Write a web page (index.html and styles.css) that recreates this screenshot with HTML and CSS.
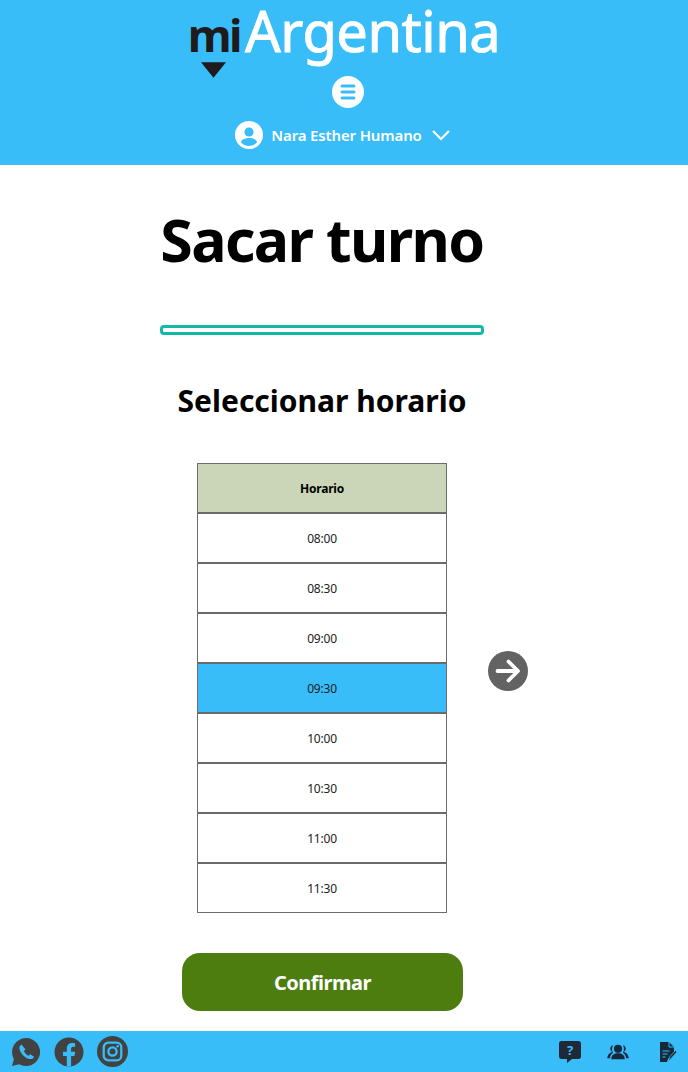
FILE: index.html
```html
<!DOCTYPE html>
<html lang="es">
  <head>
    <meta charset="UTF-8" />
    <meta name="viewport" content="width=device-width, initial-scale=1.0" />
    <title>miArgentina - Sacar turno</title>
    <link rel="stylesheet" href="styles.css">
  </head>
  <body>
    <header class="top-bar">
      <a href="#" class="logo">
        <span class="logo-mi">mi<svg class="logo-pin" viewBox="0 0 24 15"><path d="M0 0h24L12 15z" /></svg></span>
        <span class="logo-argentina">Argentina</span>
      </a>
      <button class="menu-btn" aria-label="Menu">
        <svg viewBox="0 0 32 32" width="32" height="32">
          <circle cx="16" cy="16" r="16" fill="#fff" />
          <path d="M10 10h12M10 16h12M10 22h12" stroke="#38bdf8" stroke-width="3" stroke-linecap="round" />
        </svg>
      </button>
      <div class="user-row">
        <svg viewBox="0 0 28 28" width="28" height="28">
          <circle cx="14" cy="14" r="14" fill="#fff" />
          <circle cx="14" cy="11" r="4.6" fill="#38bdf8" />
          <path d="M5.8 21c1.5-3 4.4-4 8.2-4s6.700 1 8.200 4c-2 2.500-5 4-8.200 4s-6.200-1.500-8.200-4z" fill="#38bdf8" />
        </svg>
        <span class="user-name">Nara Esther Humano</span>
        <svg class="user-caret" viewBox="0 0 18 11" width="18" height="11">
          <path d="M1 1l8 8 8-8" fill="none" stroke="#fff" stroke-width="2.200" />
        </svg>
      </div>
    </header>

    <main class="content">
      <div class="column">
        <h1 class="page-title">Sacar turno</h1>
        <div class="progress"></div>
        <h2 class="step-title">Seleccionar horario</h2>

        <div class="table-row">
          <div></div>
          <table class="hours">
            <thead>
              <tr><th>Horario</th></tr>
            </thead>
            <tbody>
              <tr><td>08:00</td></tr>
              <tr><td>08:30</td></tr>
              <tr><td>09:00</td></tr>
              <tr><td class="selected">09:30</td></tr>
              <tr><td>10:00</td></tr>
              <tr><td>10:30</td></tr>
              <tr><td>11:00</td></tr>
              <tr><td>11:30</td></tr>
            </tbody>
          </table>
          <button class="next-btn" aria-label="Siguiente">
            <svg viewBox="0 0 40 40" width="40" height="40">
              <circle cx="20" cy="20" r="20" fill="#636363" />
              <path d="M9.500 20h20M20.500 10.500l9.500 9.500-9.500 9.500" fill="none" stroke="#fff" stroke-width="3.800" stroke-linecap="round" stroke-linejoin="round" />
            </svg>
          </button>
        </div>

        <button class="confirm-btn">Confirmar</button>
      </div>
    </main>

    <footer class="bottom-bar">
      <div class="social">
        <svg viewBox="0 0 30 30" width="30" height="30">
          <path d="M15 1a14 14 0 1 1-6.800 26.200L1 29l1.900-7A14 14 0 0 1 15 1z" fill="#424242" />
          <path d="M10.500 7.500c-1.500.7-2.500 2.200-2 4.500 1 4.500 5.300 9 10 10 2.300.4 4-.6 4.500-2.300l-3.700-2.400-1.800 1.500c-2-.8-3.800-2.700-4.600-4.700l1.500-1.800z" fill="#38bdf8" />
        </svg>
        <svg viewBox="0 0 30 30" width="30" height="30">
          <circle cx="15" cy="15" r="14.500" fill="#424242" />
          <path d="M12.800 29.500V19H9v-4.200h3.800v-3.200c0-3.700 2.200-5.600 5.500-5.600 1.300 0 2.800.2 2.800.2v3.500h-1.700c-1.800 0-2.300 1-2.300 2.200v2.900h4l-.6 4.200h-3.400v10.500z" fill="#38bdf8" />
        </svg>
        <svg viewBox="0 0 30 30" width="31" height="31">
          <circle cx="15" cy="15" r="15" fill="#424242" />
          <rect x="6.500" y="6.500" width="17" height="17" rx="4.500" fill="none" stroke="#38bdf8" stroke-width="2.200" />
          <circle cx="15" cy="15" r="4" fill="none" stroke="#38bdf8" stroke-width="2.200" />
          <circle cx="20" cy="10" r="1.200" fill="#38bdf8" />
        </svg>
      </div>
      <div class="links">
        <svg viewBox="0 0 24 24" width="24" height="24">
          <path d="M3.500 1h17C22 1 23 2 23 3.500v13c0 1.500-1 2.500-2.500 2.500H14l-5 4v-4H3.500C2 19 1 18 1 16.500v-13C1 2 2 1 3.500 1z" fill="#1f2a36" />
          <text x="12" y="14.500" class="help-mark">?</text>
        </svg>
        <svg viewBox="0 0 26 20" width="24" height="18">
          <circle cx="13" cy="6.500" r="4.500" fill="#15293b" />
          <path d="M5.500 18c0-4.500 3-6.500 7.500-6.500s7.500 2 7.500 6.500z" fill="#15293b" />
          <path d="M7.500 2.500a4 4 0 0 0-1 7.500c-3 .8-5 3-5.500 7h3c.3-3 1.500-5 3.500-6.300-1.500-2-1.500-5.500 0-8.200zM18.500 2.500a4 4 0 0 1 1 7.500c3 .8 5 3 5.500 7h-3c-.3-3-1.500-5-3.500-6.300 1.500-2 1.500-5.500 0-8.200z" fill="#15293b" />
        </svg>
        <svg class="doc-icon" viewBox="0 0 18 22" width="18" height="22">
          <path d="M1 1h9l5 5v5l-6 7-1 3H1z" fill="#15293b" />
          <path d="M3.500 10h7M3.500 13h5M3.500 16h3" stroke="#38bdf8" stroke-width="1.200" />
          <path d="M10 1v5h5" fill="none" stroke="#38bdf8" stroke-width="1" />
          <path d="M9.500 20l1-4 6-6.500 1.500 1.500-6 6.500z" fill="#15293b" stroke="#38bdf8" stroke-width=".7" />
        </svg>
      </div>
    </footer>
  </body>
</html>
```

FILE: styles.css
```css
* {
  box-sizing: border-box;
}

body {
  margin: 0;
  min-height: 1072px;
  display: flex;
  flex-direction: column;
  font-family: "Noto Sans", "Open Sans", sans-serif;
  background-color: #fff;
  color: #000;
}

button {
  border: none;
  padding: 0;
  background: none;
  font-family: inherit;
}

svg {
  display: block;
}

/* header */
.top-bar {
  height: 165px;
  display: flex;
  flex-direction: column;
  align-items: center;
  background-color: #38bdf8;
}

.logo {
  display: flex;
  align-items: baseline;
  height: 76px;
  text-decoration: none;
}

.logo-mi {
  position: relative;
  margin-right: 5px;
  font-size: 45px;
  line-height: 62px;
  font-weight: 700;
  letter-spacing: -2.5px;
  color: #1f1a1c;
}

.logo-pin {
  position: absolute;
  left: 13px;
  top: 58px;
  width: 25px;
  height: 16px;
  fill: #1f1a1c;
}

.logo-argentina {
  font-size: 56px;
  line-height: 60px;
  letter-spacing: -.5px;
  -webkit-text-stroke: .9px #fff;
  color: #fff;
}

.menu-btn {
  display: block;
  height: 32px;
  margin-left: 8px;
}

.user-row {
  display: flex;
  align-items: center;
  margin-top: 13px;
  margin-left: -3px;
}

.user-name {
  margin-left: 8px;
  font-size: 15px;
  font-weight: 600;
  letter-spacing: -.15px;
  color: #fff;
}

.user-caret {
  margin-left: 10px;
}

/* main column */
.content {
  flex: 1;
  display: flex;
  justify-content: center;
  padding-right: 44px;
}

.column {
  width: 324px;
  display: flex;
  flex-direction: column;
}

.page-title {
  margin: 35px 0 0;
  font-size: 59px;
  line-height: 78px;
  font-weight: 700;
  letter-spacing: -1.6px;
  text-align: center;
  white-space: nowrap;
}

.progress {
  height: 10px;
  margin-top: 47px;
  border: 3px solid #14b8a6;
  border-radius: 4px;
}

.step-title {
  margin: 46px 0 0;
  font-size: 30px;
  line-height: 40px;
  font-weight: 700;
  text-align: center;
  white-space: nowrap;
}

.table-row {
  display: grid;
  grid-template-columns: 37px 250px 37px;
  margin-top: 42px;
}

.hours {
  width: 250px;
  border-collapse: separate;
  border-spacing: 0;
  font-size: 12px;
  letter-spacing: -.2px;
  color: #222;
  text-align: center;
}

.hours th,
.hours td {
  height: 50px;
  padding: 0;
  border: 1px solid #6b6b6b;
}

.hours th {
  font-weight: 700;
  color: #000;
  background-color: #cbd6b8;
}

.hours td.selected {
  background-color: #38bdf8;
}

.next-btn {
  width: 40px;
  height: 40px;
  margin: 188px 0 0 41px;
}

.confirm-btn {
  width: 281px;
  height: 58px;
  margin: 40px 0 0 22px;
  border-radius: 18px;
  font-size: 20px;
  font-weight: 700;
  letter-spacing: -.5px;
  color: #fff;
  background-color: #4d7c0f;
}

/* footer */
.bottom-bar {
  height: 41px;
  display: flex;
  justify-content: space-between;
  align-items: center;
  padding: 0 11px;
  background-color: #38bdf8;
}

.social {
  display: flex;
  align-items: center;
  gap: 13px;
}

.links {
  display: flex;
  align-items: center;
  gap: 24px;
}

.doc-icon {
  margin-left: 5px;
}

.help-mark {
  font-size: 13px;
  font-weight: 700;
  fill: #38bdf8;
  text-anchor: middle;
}
```
